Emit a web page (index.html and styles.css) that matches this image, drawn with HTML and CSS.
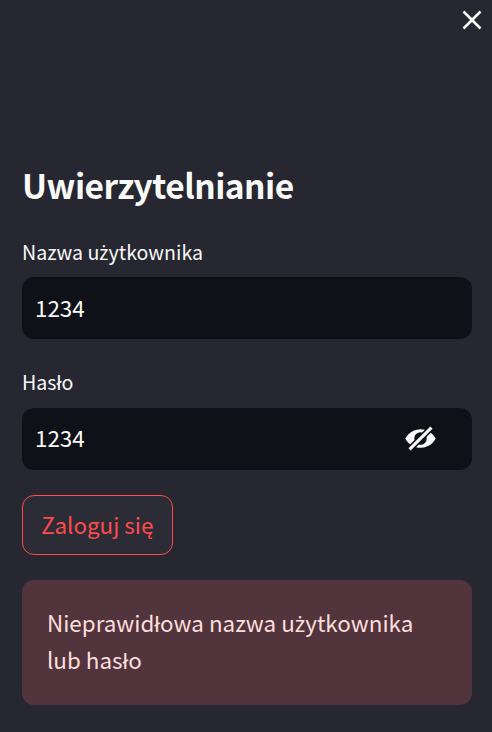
FILE: index.html
```html
<!DOCTYPE html>
<html lang="pl">
<head>
<meta charset="utf-8">
<title>Uwierzytelnianie</title>
<link rel="stylesheet" href="styles.css">
</head>
<body>
<aside class="sidebar">
  <header class="topbar">
    <button class="close" type="button" aria-label="Zamknij">
      <svg viewBox="0 0 20 20" fill="none" stroke="currentColor" stroke-width="2.6"><path d="M1.5 1.5l17 17M18.5 1.5l-17 17"/></svg>
    </button>
  </header>
  <form class="login">
    <h2 class="title">Uwierzytelnianie</h2>
    <label class="label" for="user">Nazwa u<span class="dotted">ż</span>ytkownika</label>
    <div class="field"><input id="user" class="input" type="text" value="1234"></div>
    <label class="label label-next" for="pass">Hasło</label>
    <div class="field">
      <input id="pass" class="input input-pass" type="text" value="1234">
      <button class="toggle" type="button" aria-label="Ukryj hasło">
        <svg viewBox="0 0 20 20" fill="currentColor"><path d="M12.81 4.36l-1.77 1.78a4 4 0 0 0-4.9 4.9l-2.76 2.75C2.06 12.79.96 11.49.2 10a11 11 0 0 1 12.6-5.64zm3.8 1.85c1.33 1 2.43 2.3 3.2 3.79a11 11 0 0 1-12.62 5.64l1.77-1.78a4 4 0 0 0 4.9-4.9l2.76-2.75zm-.25-3.99l1.42 1.42L3.64 17.78l-1.42-1.42L16.36 2.22z"/></svg>
      </button>
    </div>
    <button class="submit" type="button">Zaloguj się</button>
    <div class="alert" role="alert">Nieprawidłowa nazwa u<span class="dotted">ż</span>ytkownika<br>lub hasło</div>
  </form>
</aside>
</body>
</html>
```
FILE: styles.css
```css
* { box-sizing: border-box; }
body {
  margin: 0;
  background: #262730;
  color: #fafafa;
  font-family: "Noto Sans CJK SC", "Noto Sans", sans-serif;
  font-size: 22.4px;
}
button, input { font: inherit; color: inherit; margin: 0; padding: 0; border: 0; background: none; }
svg { display: block; width: 100%; height: 100%; }
.sidebar { height: 732px; overflow: hidden; }
.topbar { display: flex; justify-content: flex-end; height: 158px; padding: 10px 10px 0 0; }
.close { width: 20px; height: 20px; }
.login { display: flex; flex-direction: column; padding: 0 20px 0 22px; }
.title { margin: 0; height: 81px; line-height: 54px; font-size: 33.5px; font-weight: 600; letter-spacing: -0.53px; white-space: nowrap; }
.label { height: 38px; line-height: 26px; font-size: 19.6px; white-space: nowrap; }
.label-next { margin-top: 30px; height: 39px; }
.dotted { font-family: "Noto Sans", sans-serif; line-height: 1; }
.field { display: flex; align-items: center; height: 62px; padding: 0 36px 0 13px; border-radius: 12px; background: #0e1117; }
.input { flex: 1; min-width: 0; height: 42px; line-height: 40px; padding-bottom: 2px; outline: 0; }
.input-pass { padding-bottom: 4px; }
.toggle { width: 31px; height: 31px; margin-bottom: 1px; }
.submit { align-self: flex-start; width: 151px; height: 60px; margin-top: 25px; padding-bottom: 2px; border: 1px solid #ff4b4b; border-radius: 12px; background: #2b2c36; color: #ff4b4b; line-height: 56px; }
.alert { height: 125px; margin-top: 25px; padding: 24px 25px; border-radius: 12px; background: #52353c; color: #ffdede; line-height: 37px; }
```
